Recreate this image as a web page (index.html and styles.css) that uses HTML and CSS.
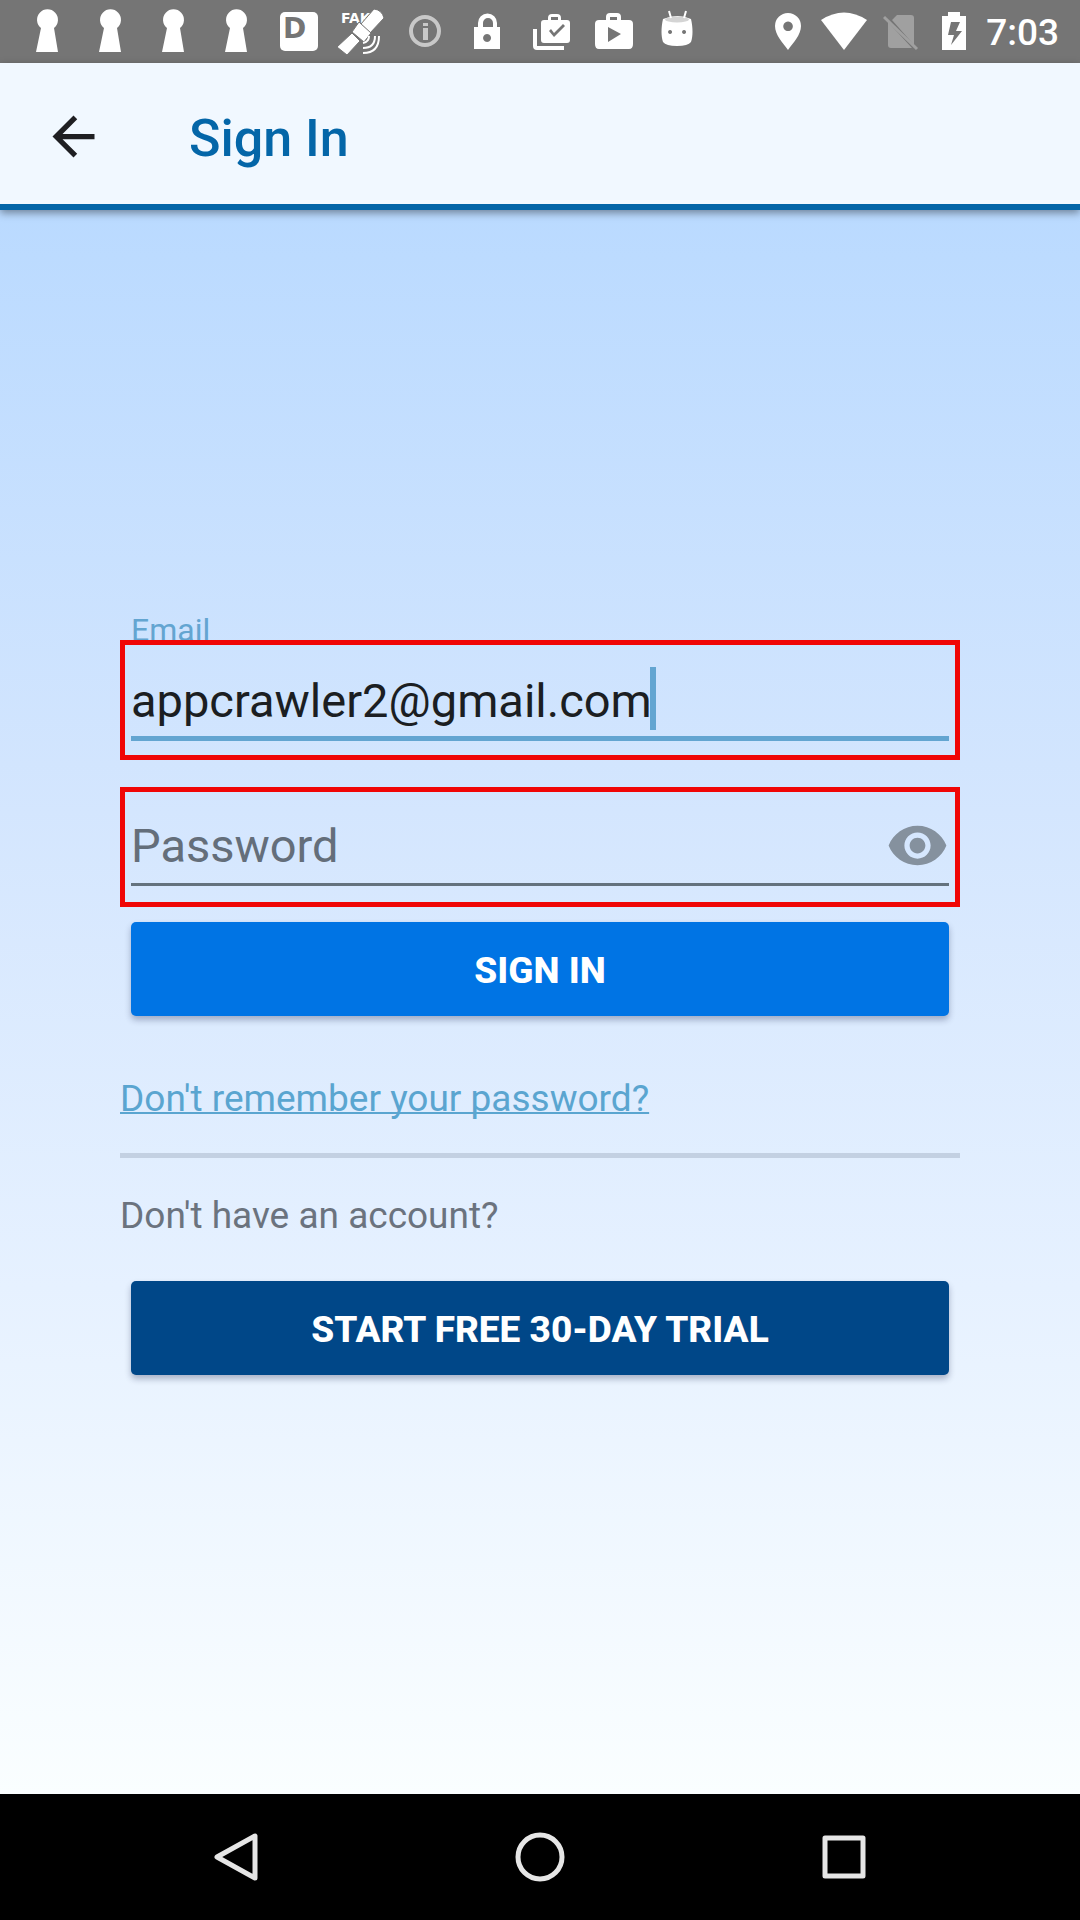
FILE: index.html
```html
<!DOCTYPE html>
<html lang="en">
<head>
<meta charset="utf-8">
<meta name="viewport" content="width=device-width, initial-scale=1">
<title>Sign In</title>
<link rel="stylesheet" href="styles.css">
</head>
<body>
<div class="status">
  <div class="notices">
    <svg class="notice" viewBox="0 0 63 63"><path d="M25 28a10.500 10.500 0 1 1 13 0l4 24H20z"/></svg>
    <svg class="notice" viewBox="0 0 63 63"><path d="M25 28a10.500 10.500 0 1 1 13 0l4 24H20z"/></svg>
    <svg class="notice" viewBox="0 0 63 63"><path d="M25 28a10.500 10.500 0 1 1 13 0l4 24H20z"/></svg>
    <svg class="notice" viewBox="0 0 63 63"><path d="M25 28a10.500 10.500 0 1 1 13 0l4 24H20z"/></svg>
    <svg class="notice" viewBox="0 0 63 63"><rect x="12" y="12" width="38" height="39" rx="5"/><text class="letter" x="15" y="38">D</text></svg>
    <svg class="notice" viewBox="0 0 63 63"><text class="fake" x="10" y="23">FAKE</text><path class="edge" d="M43 9q8 1 10 9L39 33l-9-9z"/><path class="edge" d="M21 33l8 8-13 14-10-8z"/><path class="edge" d="M28 22l12 11-7 9-12-10z"/><path class="wave" d="M32 43q6-1 6-7M32 48q12 0 12-12M32 53q16 0 16-17"/></svg>
    <svg class="notice faded" viewBox="0 0 63 63"><circle class="ring" cx="31" cy="31" r="14"/><path d="M29 23h5v3h-5zM29 28h5v12h-5z"/></svg>
    <svg class="notice" viewBox="0 0 63 63"><path fill-rule="evenodd" d="M17 27h4v-4a9.500 9.500 0 0 1 19 0v4h3v22H17zM26 27h10v-4a5 5 0 0 0-10 0zM30 34a4 4 0 1 0 .1 0z"/></svg>
    <svg class="notice" viewBox="0 0 63 63"><path fill-rule="evenodd" d="M22 20h6v-2q0-4 4-4h5q4 0 4 4v2h6q3 0 3 3v17q0 3-3 3H24q-3 0-3-3V23q0-3 3-3zM31 20h7v-3h-7zM29 31l5 6 11-11-2-2-9 9-3-4z"/><path d="M13 29h4v17h27v4H17q-4 0-4-4z"/></svg>
    <svg class="notice" viewBox="0 0 63 63"><path fill-rule="evenodd" d="M16 20h7v-3q0-4 4-4h7q4 0 4 4v3h8q4 0 4 4v20q0 5-4 5H16q-4 0-4-5V24q0-4 4-4zM27 20h7v-3h-7zM25 27v15l13-8z"/></svg>
    <svg class="notice" viewBox="0 0 63 63"><path fill-rule="evenodd" d="M17 19q15-6 28 0c2 9 2 17 0 23q-3 4-14 4t-14-4c-2-6-2-14 0-23zM24 30a2 2 0 1 0 .1 0zM38 30a2 2 0 1 0 .1 0z"/><ellipse class="lid" cx="31" cy="19.500" rx="12" ry="3"/><path class="horn" d="M23 11l2 7M40 11l-2 7"/></svg>
  </div>
  <div class="system">
    <svg width="30" height="63" viewBox="0 0 30 63"><path fill-rule="evenodd" d="M13 13a13 13 0 0 1 13 13c0 9-8 17-13 24C8 43 0 35 0 26a13 13 0 0 1 13-13zm0 8.500a4.800 4.800 0 1 0 .1 0z"/></svg>
    <svg width="46" height="63" viewBox="0 0 46 63"><path d="M0 20q23-15 46 0L23 50z"/></svg>
    <svg width="43" height="63" viewBox="0 0 43 63"><path class="dim" d="M14 15h14q3 0 3 3v27L9 20zM5 22l24 26H8q-3 0-3-3z"/><path class="slash" d="M1 17l33 32"/></svg>
    <svg width="28" height="63" viewBox="0 0 28 63"><path fill-rule="evenodd" d="M6 12h12v4h6v34H0V16h6zM9 22L6 35h6l-3 10 11-14h-6l4-9z"/></svg>
    <span class="clock">7:03</span>
  </div>
</div>

<header class="bar">
  <button class="back" type="button" aria-label="Back"><svg width="63" height="63" viewBox="0 0 24 24"><path d="M20 11H7.830l5.590-5.590L12 4l-8 8 8 8 1.410-1.410L7.830 13H20v-2z"/></svg></button>
  <h1 class="title">Sign In</h1>
</header>

<main class="page">
  <form class="form">
    <label class="label" for="email">Email</label>
    <div class="field field-active">
      <input class="input" id="email" type="email" value="appcrawler2@gmail.com">
      <span class="caret"></span>
    </div>
    <div class="field">
      <div class="secret">
        <input class="input" id="password" type="password" placeholder="Password" aria-label="Password">
        <button class="reveal" type="button" aria-label="Show password"><svg width="63" height="63" viewBox="0 0 24 24"><path d="M12 4.500C7 4.500 2.730 7.610 1 12c1.730 4.390 6 7.500 11 7.500s9.270-3.110 11-7.500c-1.730-4.390-6-7.500-11-7.500zM12 17c-2.760 0-5-2.240-5-5s2.240-5 5-5 5 2.240 5 5-2.240 5-5 5zm0-8c-1.660 0-3 1.340-3 3s1.340 3 3 3 3-1.340 3-3-1.340-3-3-3z"/></svg></button>
      </div>
    </div>
    <button class="button" type="submit">SIGN IN</button>
    <a class="forgot" href="#">Don't remember your password?</a>
    <hr class="rule">
    <p class="prompt">Don't have an account?</p>
    <button class="button button-dark" type="button">START FREE 30-DAY TRIAL</button>
  </form>
</main>

<nav class="nav">
  <button class="key" type="button" aria-label="Back"><svg width="54" height="54" viewBox="0 0 54 54"><path d="M46 6v42L8 27z"/></svg></button>
  <button class="key" type="button" aria-label="Home"><svg width="54" height="54" viewBox="0 0 54 54"><circle cx="27" cy="27" r="22"/></svg></button>
  <button class="key" type="button" aria-label="Recent apps"><svg width="54" height="54" viewBox="0 0 54 54"><rect x="8" y="8" width="38" height="38"/></svg></button>
</nav>
</body>
</html>
```

FILE: styles.css
```css
* {
  box-sizing: border-box;
}

body {
  display: flex;
  flex-direction: column;
  min-height: 100vh;
  margin: 0;
  font-family: Roboto, "Liberation Sans", sans-serif;
  color: #1b1e22;
}

button {
  padding: 0;
  border: 0;
  background: none;
  font-family: inherit;
}

svg {
  display: block;
}

/* Status bar */
.status {
  display: flex;
  justify-content: space-between;
  height: 63px;
  padding: 0 21px 0 16px;
  background: #757575;
  color: #fff;
  fill: #fff;
}

.notices,
.system {
  display: flex;
  align-items: center;
}

.system {
  gap: 16px;
}

.notice {
  width: 63px;
  height: 63px;
}

.letter {
  font: bold 28px "DejaVu Sans", sans-serif;
  fill: #757575;
}

.fake {
  font: bold 14px "DejaVu Sans", sans-serif;
}

.edge {
  stroke: #757575;
  stroke-width: 1;
}

.wave {
  fill: none;
  stroke: #fff;
  stroke-width: 2;
}

.faded {
  opacity: 0.6;
}

.ring {
  fill: none;
  stroke: #fff;
  stroke-width: 4;
}

.lid {
  fill: #d4d4d4;
}

.horn {
  stroke: #fff;
  stroke-width: 2;
}

.dim {
  fill: #a0a0a0;
}

.slash {
  stroke: #a0a0a0;
  stroke-width: 3;
}

.clock {
  padding-top: 2px;
  font-size: 37px;
  font-weight: 500;
  line-height: 48px;
}

/* App bar */
.bar {
  position: relative;
  display: flex;
  align-items: center;
  gap: 84px;
  height: 147px;
  padding: 6px 42px 0;
  border-bottom: 6px solid #0466a8;
  background: #f1f8ff;
  box-shadow: 0 3px 8px rgba(0, 0, 0, 0.4);
}

.back {
  fill: #1f1f22;
}

.title {
  margin: 0;
  padding-top: 4px;
  font-size: 52px;
  font-weight: 500;
  line-height: 60px;
  color: #0466a8;
}

/* Sign-in form */
.page {
  display: flex;
  flex: 1;
  flex-direction: column;
  justify-content: center;
  padding: 0 120px;
  background: linear-gradient(#badaff, #d4e6fe 38%, #e6f1ff 68%, #fafeff);
}

.form {
  display: flex;
  flex-direction: column;
  padding-bottom: 14px;
}

.label {
  margin: 0 11px -5px;
  font-size: 32px;
  line-height: 30px;
  color: #63a5d1;
}

.field {
  position: relative;
  height: 120px;
  margin-bottom: 15px;
  padding: 0 6px;
  border: 5px solid #f00606;
}

.field-active {
  margin-bottom: 27px;
}

.input {
  width: 100%;
  height: 94px;
  padding: 16px 0 0;
  border: 0;
  border-bottom: 3px solid #64727d;
  outline: 0;
  background: none;
  font: 47px Roboto, "Liberation Sans", sans-serif;
  color: #1b1e22;
}

.field-active .input {
  height: 96px;
  padding-top: 20px;
  border-bottom: 5px solid #63a5d1;
}

.input::placeholder {
  color: #646e7a;
  opacity: 1;
}

.caret {
  position: absolute;
  top: 22px;
  left: 525px;
  width: 6px;
  height: 63px;
  background: #63a5d1;
}

.secret {
  display: grid;
}

.secret > * {
  grid-area: 1 / 1;
}

.reveal {
  justify-self: end;
  align-self: center;
  padding-top: 12px;
  fill: #85919e;
}

.button {
  height: 94px;
  margin: 0 11px;
  padding-top: 3px;
  border-radius: 5px;
  background: #0074e4;
  box-shadow: 0 4px 6px rgba(20, 30, 70, 0.3);
  font-size: 37px;
  font-weight: 800;
  color: #fff;
}

.button-dark {
  background: #004788;
}

.forgot,
.prompt {
  margin: 0;
  font-size: 37px;
  line-height: 48px;
}

.forgot {
  align-self: flex-start;
  margin: 59px 0 30px;
  color: #5aa5d0;
  text-decoration-thickness: 2px;
  text-decoration-skip-ink: none;
}

.rule {
  width: 100%;
  height: 5px;
  margin: 0 0 34px;
  border: 0;
  background: #c3d0e2;
}

.prompt {
  margin-bottom: 41px;
  color: #6b737e;
}

/* System navigation */
.nav {
  display: grid;
  grid-template-columns: repeat(3, 1fr);
  height: 126px;
  padding: 0 84px;
  background: #000;
}

.key {
  display: flex;
  align-items: center;
  justify-content: center;
  fill: none;
  stroke: #e6e6e6;
  stroke-width: 5;
  stroke-linejoin: round;
}
```
